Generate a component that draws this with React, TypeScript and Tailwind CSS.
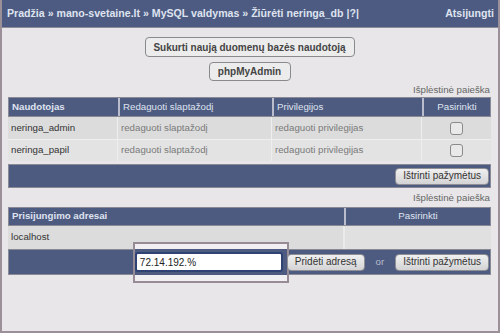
import React from "react";

const navy = "bg-[#4e5b81]";

function SmallBtn({ children }: { children: React.ReactNode }) {
  return (
    <button className="shrink-0 whitespace-nowrap h-[17px] px-[7px] rounded-[4px] border border-[#8f8f95] bg-gradient-to-b from-[#f0f0f0] to-[#d4d4d6] text-[#333] text-[10px] leading-none">
      {children}
    </button>
  );
}

function Checkbox() {
  return <div className="w-[13px] h-[13px] rounded-[3px] border border-[#8a8a8a] bg-[#e9e9e9]" />;
}

export default function App() {
  return (
    <div className="w-[500px] h-[333px] overflow-hidden bg-[#e8e6e8] border-2 border-t-0 border-[#9c9098] font-['Liberation_Sans',Arial,sans-serif] text-[9.7px]">
      <header className="h-[28px] bg-[#4d5b82] border-b border-[#8f8c9a] flex items-center justify-between pl-[5px] pr-[4px] text-[#dfe3ef] font-bold text-[10.6px]">
        <span className="whitespace-nowrap">Pradžia » mano-svetaine.lt » MySQL valdymas » Žiūrėti neringa_db |?|</span>
        <span>Atsijungti</span>
      </header>

      <div className="pl-[6px] pr-[7px]">
        <div className="flex flex-col items-center gap-[5px] pt-[9px]">
          <button className="whitespace-nowrap h-[20px] w-[210px] rounded-[4px] border border-[#8a8a8e] bg-[#ececec] text-[#444] font-bold text-[10px]">
            Sukurti naują duomenų bazės naudotoją
          </button>
          <button className="whitespace-nowrap h-[19px] w-[82px] rounded-[4px] border border-[#8a8a8e] bg-[#ececec] text-[#444] font-bold text-[10px]">
            phpMyAdmin
          </button>
        </div>

        <div className="text-right text-[#666] leading-[14px] mt-[2px] pr-[1px]">Išplėstinė paieška</div>

        {/* Table 1 */}
        <div>
          <div className={`grid grid-cols-[109px_154px_150px_1fr] h-[20px] ${navy} border border-[#8a8a96] text-[#dfe3ef]`}>
            <div className="flex items-center pl-[3px] font-bold">Naudotojas</div>
            <div className="flex items-center pl-[3px] border-l-2 border-[#b9bdcc]">Redaguoti slaptažodį</div>
            <div className="flex items-center pl-[3px] border-l-2 border-[#b9bdcc]">Privilegijos</div>
            <div className="flex items-center justify-center border-l-2 border-[#b9bdcc]">Pasirinkti</div>
          </div>
          {[
            { n: "neringa_admin", bg: "bg-[#dcdcdc]" },
            { n: "neringa_papil", bg: "bg-[#e3e3e3] border-t border-[#efefef]" },
          ].map((r) => (
            <div key={r.n} className={`grid grid-cols-[109px_154px_150px_1fr] h-[22px] ${r.bg}`}>
              <div className="flex items-center pl-[3px] text-[#333]">{r.n}</div>
              <div className="flex items-center pl-[3px] border-l border-[#eeeeee] text-[#7a7a7a]">redaguoti slaptažodį</div>
              <div className="flex items-center pl-[3px] border-l border-[#eeeeee] text-[#7a7a7a]">redaguoti privilegijas</div>
              <div className="flex items-center justify-center border-l border-[#eeeeee]">
                <Checkbox />
              </div>
            </div>
          ))}
          <div className={`mt-[3px] h-[24px] ${navy} border border-[#8a8a96] flex items-center justify-end pr-[1px]`}>
            <SmallBtn>Ištrinti pažymėtus</SmallBtn>
          </div>
        </div>

        <div className="text-right text-[#666] leading-[14px] mt-[3px] pr-[1px]">Išplėstinė paieška</div>

        {/* Table 2 */}
        <div className="mt-[2px]">
          <div className={`grid grid-cols-[335px_1fr] h-[19px] ${navy} border border-[#8a8a96] text-[#dfe3ef]`}>
            <div className="flex items-center pl-[3px] font-bold">Prisijungimo adresai</div>
            <div className="flex items-center justify-center border-l-2 border-[#b9bdcc]">Pasirinkti</div>
          </div>
          <div className="grid grid-cols-[335px_1fr] h-[23px] bg-[#dcdcdc]">
            <div className="flex items-center pl-[3px] text-[#333]">localhost</div>
            <div className="border-l-2 border-[#ebebeb] bg-[#e0e0e0]" />
          </div>
          <div className={`relative h-[26px] ${navy} border border-[#8a8a96] flex items-center justify-end pr-[1px]`}>
            <div className="absolute left-[124px] top-[-8px] w-[156px] h-[41px] border-2 border-[#978b95] bg-[#f1eff1]">
              <div className={`absolute left-0 right-0 top-[5px] bottom-[6px] ${navy}`} />
            </div>
            <div className="relative w-[148px] h-[20px] rounded-[3px] border-2 border-[#2f4274] bg-white flex items-center pl-[3px] text-[#222] text-[10px]">
              72.14.192.%
            </div>
            <div className="relative ml-[4px] flex">
              <SmallBtn>Pridėti adresą</SmallBtn>
            </div>
            <span className="relative mx-[11px] text-[#b9bdcc]">or</span>
            <div className="relative flex">
              <SmallBtn>Ištrinti pažymėtus</SmallBtn>
            </div>
          </div>
        </div>
      </div>
    </div>
  );
}
